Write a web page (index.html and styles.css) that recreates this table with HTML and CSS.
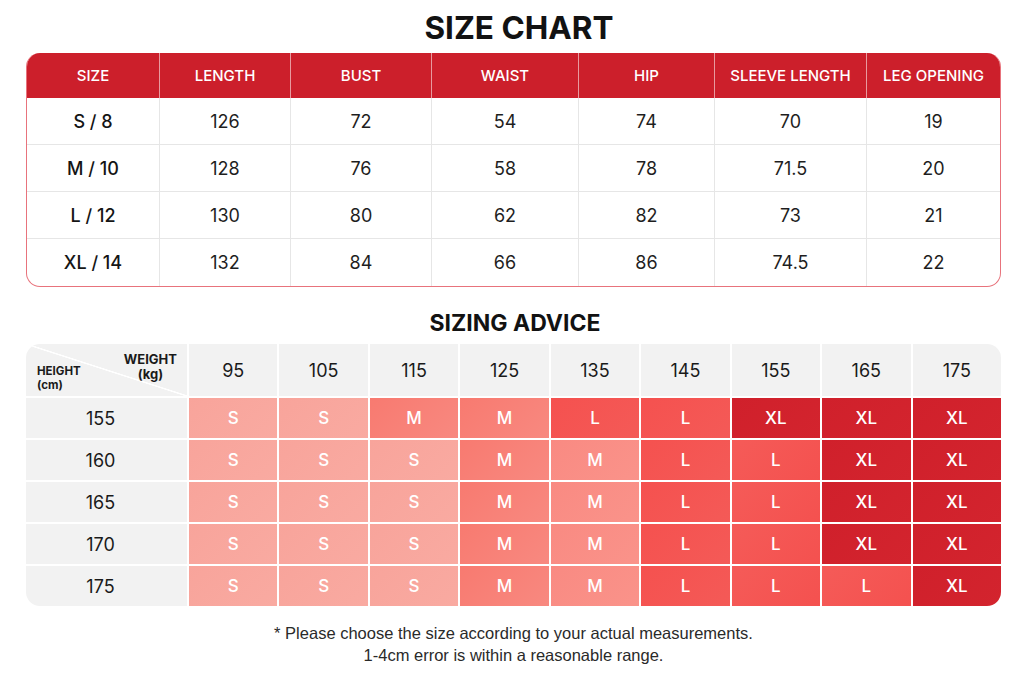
FILE: index.html
```html
<!DOCTYPE html>
<html>
<head>
<meta charset="utf-8">
<link rel="stylesheet" href="styles.css">
</head>
<body>
<main class="page">
  <h1 class="title">SIZE CHART</h1>
  <div class="chart">
    <div class="hd">SIZE</div><div class="hd">LENGTH</div><div class="hd">BUST</div><div class="hd">WAIST</div><div class="hd">HIP</div><div class="hd">SLEEVE LENGTH</div><div class="hd last">LEG OPENING</div>
    <div class="cell sz">S / 8</div><div class="cell">126</div><div class="cell">72</div><div class="cell">54</div><div class="cell">74</div><div class="cell">70</div><div class="cell last">19</div>
    <div class="cell sz">M / 10</div><div class="cell">128</div><div class="cell">76</div><div class="cell">58</div><div class="cell">78</div><div class="cell">71.5</div><div class="cell last">20</div>
    <div class="cell sz">L / 12</div><div class="cell">130</div><div class="cell">80</div><div class="cell">62</div><div class="cell">82</div><div class="cell">73</div><div class="cell last">21</div>
    <div class="cell sz bottom">XL / 14</div><div class="cell bottom">132</div><div class="cell bottom">84</div><div class="cell bottom">66</div><div class="cell bottom">86</div><div class="cell bottom">74.5</div><div class="cell last bottom">22</div>
  </div>

  <h2 class="subtitle">SIZING ADVICE</h2>
  <div class="advice">
    <div class="corner">
      <div class="weight">WEIGHT<br>(kg)</div>
      <div class="height">HEIGHT<br>(cm)</div>
    </div>
    <div class="wh">95</div><div class="wh">105</div><div class="wh">115</div><div class="wh">125</div><div class="wh">135</div><div class="wh">145</div><div class="wh">155</div><div class="wh">165</div><div class="wh">175</div>

    <div class="hh">155</div>
    <div class="s c-s">S</div><div class="s c-s">S</div><div class="s c-m">M</div><div class="s c-m">M</div><div class="s c-l">L</div><div class="s c-l">L</div><div class="s c-xl">XL</div><div class="s c-xl">XL</div><div class="s c-xl">XL</div>

    <div class="hh">160</div>
    <div class="s c-s">S</div><div class="s c-s">S</div><div class="s c-s">S</div><div class="s c-m">M</div><div class="s c-m2">M</div><div class="s c-l">L</div><div class="s c-l2">L</div><div class="s c-xl">XL</div><div class="s c-xl">XL</div>

    <div class="hh">165</div>
    <div class="s c-s">S</div><div class="s c-s">S</div><div class="s c-s">S</div><div class="s c-m">M</div><div class="s c-m2">M</div><div class="s c-l">L</div><div class="s c-l2">L</div><div class="s c-xl">XL</div><div class="s c-xl">XL</div>

    <div class="hh">170</div>
    <div class="s c-s">S</div><div class="s c-s">S</div><div class="s c-s">S</div><div class="s c-m">M</div><div class="s c-m2">M</div><div class="s c-l">L</div><div class="s c-l2">L</div><div class="s c-xl">XL</div><div class="s c-xl">XL</div>

    <div class="hh">175</div>
    <div class="s c-s">S</div><div class="s c-s">S</div><div class="s c-s">S</div><div class="s c-m">M</div><div class="s c-m2">M</div><div class="s c-l">L</div><div class="s c-l2">L</div><div class="s c-l2">L</div><div class="s c-xl">XL</div>
  </div>

  <p class="note">* Please choose the size according to your actual measurements.<br>1-4cm error is within a reasonable range.</p>
</main>
</body>
</html>
```

FILE: styles.css
```css
* { box-sizing: border-box; }
html, body { margin: 0; padding: 0; background: #ffffff; }
body { font-family: Inter, "Noto Sans", "Liberation Sans", sans-serif; color: #1a1a1a; }

.page {
  width: 1024px;
  height: 683px;
  padding: 8px 23px 0 26px;
  display: flex;
  flex-direction: column;
}

.title {
  margin: 0;
  padding-left: 11px;
  height: 45px;
  line-height: 40px;
  font-size: 31.5px;
  font-weight: 700;
  text-align: center;
  color: #121212;
}

.chart {
  display: grid;
  grid-template-columns: 133px 131px 141px 147px 136px 152px 1fr;
  grid-template-rows: 45px repeat(4, 47px);
  width: 975px;
  border: 1px solid #e8737c;
  border-top: none;
  border-radius: 14px;
  overflow: hidden;
  background: #fff;
}

.hd {
  background: #cc1f2b;
  color: #fff;
  font-size: 15px;
  font-weight: 500;
  display: flex;
  align-items: center;
  justify-content: center;
  border-right: 1px solid rgba(255,255,255,0.55);
}
.hd.last { border-right: none; }

.cell {
  display: flex;
  align-items: center;
  justify-content: center;
  font-size: 18px;
  color: #1e1e1e;
  border-right: 1px solid #e6e6e6;
  border-bottom: 1px solid #e6e6e6;
}
.cell.last { border-right: none; }
.cell.bottom { border-bottom: none; }
.cell.sz { font-weight: 500; color: #151515; }

.subtitle {
  margin: 21px 0 0 0;
  padding-left: 3px;
  height: 36px;
  line-height: 30px;
  font-size: 23px;
  font-weight: 700;
  text-align: center;
  color: #121212;
}

.advice {
  display: grid;
  grid-template-columns: 161px repeat(9, 1fr);
  grid-template-rows: 52px repeat(5, 40px);
  gap: 2px 2px;
  width: 975px;
  background: #ffffff;
  border-radius: 14px;
  overflow: hidden;
}

.corner {
  background-color: #f2f2f2;
  background-image: linear-gradient(to top right, transparent calc(50% - 1px), #ffffff calc(50% - 0.5px), #ffffff calc(50% + 0.5px), transparent calc(50% + 1px));
  display: grid;
  grid-template-areas: "all";
  padding: 8px 10px 4px 11px;
  font-weight: 700;
  color: #1a1a1a;
}
.weight {
  grid-area: all;
  justify-self: end;
  align-self: start;
  text-align: center;
  font-size: 13px;
  line-height: 15px;
}
.height {
  grid-area: all;
  justify-self: start;
  align-self: end;
  font-size: 11.5px;
  line-height: 14px;
}

.wh, .hh {
  background: #f2f2f2;
  display: flex;
  align-items: center;
  justify-content: center;
  font-size: 18px;
  color: #1a1a1a;
}
.hh { padding-right: 12px; }

.s {
  display: flex;
  align-items: center;
  justify-content: center;
  font-size: 17px;
  font-weight: 500;
  color: #ffffff;
}
.c-s  { background: linear-gradient(135deg, #f8a49b, #f9aaa1); }
.c-m  { background: linear-gradient(135deg, #f87a70, #f88980); }
.c-m2 { background: linear-gradient(135deg, #f98a82, #fa938a); }
.c-l  { background: linear-gradient(135deg, #f5514f, #f45a57); }
.c-l2 { background: linear-gradient(135deg, #f55b58, #f4514f); }
.c-xl { background: linear-gradient(135deg, #d0202b, #d3242e); }

.note {
  margin: 16px 0 0 0;
  text-align: center;
  font-size: 16.5px;
  line-height: 22px;
  color: #2a2a2a;
  font-family: "Liberation Sans", Arial, sans-serif;
}
```
